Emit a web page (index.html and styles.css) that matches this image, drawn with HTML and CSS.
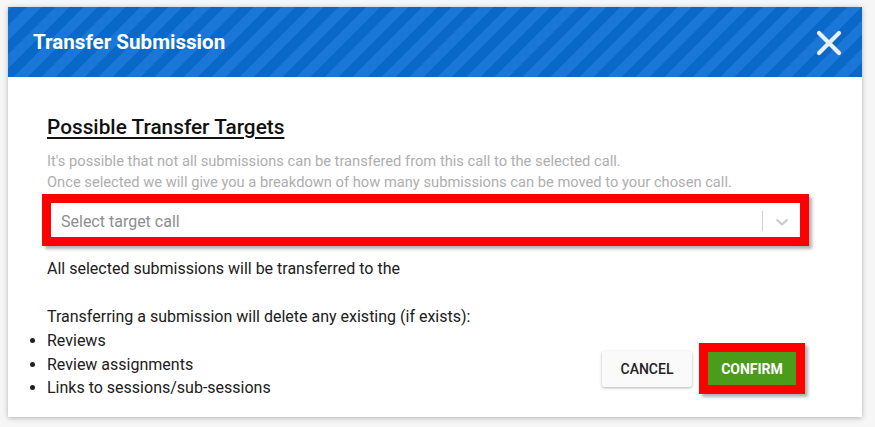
FILE: index.html
```html
<!DOCTYPE html>
<html>
<head>
<meta charset="utf-8">
<link rel="stylesheet" href="styles.css">
</head>
<body>
<div class="dialog">
  <div class="header">
    <div class="title">Transfer Submission</div>
    <svg class="close" width="26" height="26" viewBox="0 0 26 26"><path d="M3 3 L23 23 M23 3 L3 23" stroke="#eaf0f8" stroke-width="4.2" stroke-linecap="round"/></svg>
  </div>
  <div class="content">
    <h2 class="heading">Possible Transfer Targets</h2>
    <p class="hint">It's possible that not all submissions can be transfered from this call to the selected call.<br>Once selected we will give you a breakdown of how many submissions can be moved to your chosen call.</p>
    <div class="mark select-mark">
      <div class="select">
        <span class="placeholder">Select target call</span>
        <span class="sep"></span>
        <svg class="chev" width="14" height="8" viewBox="0 0 14 8"><path d="M1.5 1.5 L7 6.5 L12.5 1.5" fill="none" stroke="#c8c8c8" stroke-width="2"/></svg>
      </div>
    </div>
    <p class="info">All selected submissions will be transferred to the</p>
    <div class="bottom">
      <div class="warn">
        <p class="info">Transferring a submission will delete any existing (if exists):</p>
        <ul class="list">
          <li>Reviews</li>
          <li>Review assignments</li>
          <li>Links to sessions/sub-sessions</li>
        </ul>
      </div>
      <div class="actions">
        <button class="btn cancel">CANCEL</button>
        <div class="mark confirm-mark"><button class="btn confirm">CONFIRM</button></div>
      </div>
    </div>
  </div>
</div>
</body>
</html>
```
FILE: styles.css
```css
html, body {
  margin: 0;
  padding: 0;
}
body {
  background: #f6f6f6;
  font-family: Roboto, "Noto Sans", sans-serif;
  width: 875px;
  height: 427px;
  overflow: hidden;
  padding-top: 7px;
  box-sizing: border-box;
}
.dialog {
  margin-left: 8px;
  width: 854px;
  height: 410px;
  background: #fff;
  box-shadow: 0 1px 5px rgba(0,0,0,0.28);
  display: flex;
  flex-direction: column;
}
.header {
  height: 70px;
  flex: none;
  display: flex;
  align-items: center;
  justify-content: space-between;
  padding: 0 20px 0 25px;
  background: repeating-linear-gradient(-45deg, #0a69c8 0 10px, #1b77d7 10px 20px);
}
.title {
  color: #fff;
  font-size: 20.6px;
  font-weight: 700;
}
.close {
  display: block;
  margin-top: 1px;
}
.content {
  padding: 0 58px 0 39px;
  color: #202020;
}
.heading {
  margin: 38px 0 0;
  font-size: 20.8px;
  font-weight: 500;
  line-height: 24px;
  text-decoration: underline;
  text-underline-offset: 3px;
  color: #111;
}
.hint {
  margin: 12px 0 0;
  font-size: 14.7px;
  line-height: 21px;
  color: #aeaeae;
}
.mark {
  border: 9px solid #ff0000;
  box-shadow: 3px 3px 3px rgba(0,0,0,0.3);
}
.select-mark {
  margin: 1px -5px 0 -5px;
}
.select {
  height: 34px;
  box-sizing: border-box;
  padding: 2px 0 0 10px;
  display: flex;
  align-items: center;
  background: #fff;
}
.placeholder {
  flex: 1;
  font-size: 16px;
  color: #8e8e8e;
}
.sep {
  width: 1px;
  height: 20px;
  background: #cfcfcf;
}
.chev {
  display: block;
  margin: 1px 11px 0 12px;
}
.info {
  margin: 12px 0 0;
  font-size: 16px;
  line-height: 22px;
  color: #202020;
}
.bottom {
  display: flex;
  justify-content: space-between;
  align-items: flex-end;
  margin-top: 26px;
}
.bottom .info {
  margin: 0;
}
.list {
  margin: 1px 0 0;
  padding: 0;
  font-size: 16px;
  line-height: 23.5px;
  list-style: disc outside;
}
.actions {
  display: flex;
  align-items: center;
  gap: 7px;
  margin: 0 -1px 5.5px 0;
}
.btn {
  border: none;
  font-family: Roboto, sans-serif;
  font-size: 14px;
  font-weight: 500;
  cursor: pointer;
  padding: 0;
}
.cancel {
  width: 90px;
  height: 36px;
  background: #fafafa;
  color: #222;
  box-shadow: 0 1px 3px rgba(0,0,0,0.3);
  border-radius: 2px;
}
.confirm-mark {
  border-width: 9px;
}
.confirm {
  display: block;
  width: 88px;
  height: 33px;
  background: #4a9c1a;
  color: #fff;
  font-weight: 700;
}
```
